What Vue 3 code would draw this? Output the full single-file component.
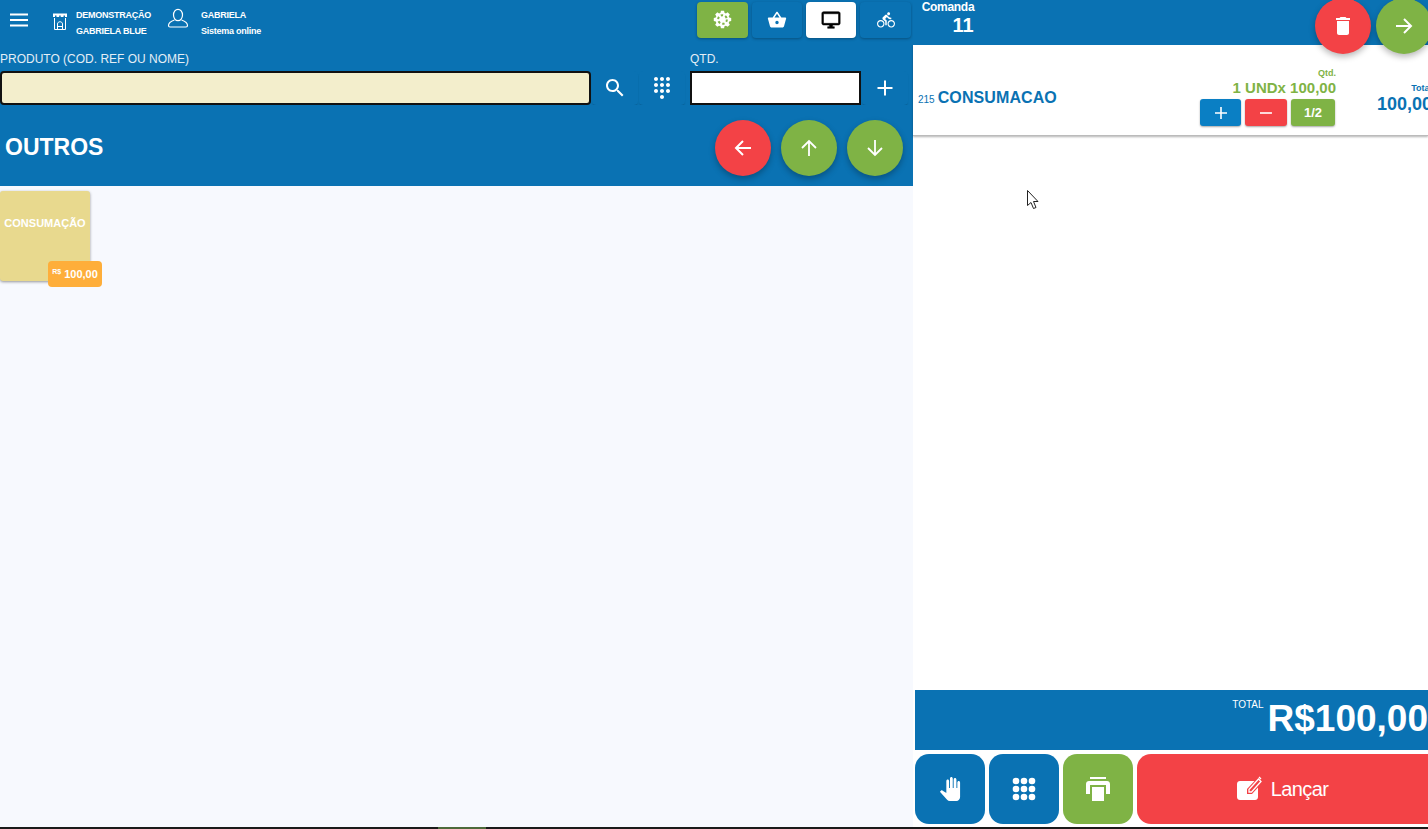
<template>
  <div class="app">
    <section class="left">
      <header class="topbar">
        <button class="menu" aria-label="menu">
          <svg width="20" height="14" viewBox="0 0 20 14"><path d="M1 1.500h18M1 7h18M1 12.500h18" stroke="#fff" stroke-width="2" /></svg>
        </button>
        <svg class="store" width="16" height="17" viewBox="0 0 16 17" fill="none" stroke="#fff">
          <path d="M2.500 5v11.500h11V5" />
          <path d="M5.500 16v-5c0-3 5-3 5 0v5M5.500 13.500h5" />
          <path d="M1 .5h14v3.500H1z" fill="#fff" stroke="none" />
          <path d="M3 2.500h1.500v2H3zM7.200 2.500h1.500v2H7.200zM11.500 2.500H13v2h-1.500z" fill="#0a72b3" stroke="none" />
        </svg>
        <div class="info">
          <span>DEMONSTRAÇÃO</span>
          <span>GABRIELA BLUE</span>
        </div>
        <svg class="person" width="22" height="22" viewBox="0 0 22 22" fill="none" stroke="#fff" stroke-width="1.200">
          <ellipse cx="11" cy="7" rx="4.500" ry="5.700" />
          <path d="M7.500 12c-3 1-6 2.500-6 5.500c0 1 .6 1.500 1.500 1.500h16c.9 0 1.500-.5 1.500-1.500c0-3-3-4.500-6-5.500" />
        </svg>
        <div class="info">
          <span>GABRIELA</span>
          <span>Sistema online</span>
        </div>
        <nav class="modes">
          <button class="mode green">
            <svg width="19" height="19" viewBox="0 0 24 24">
              <path fill="#fff" d="M10 1h4l.5 2.600 1.800.7 2.200-1.500 2.800 2.800-1.500 2.200.7 1.800 2.500.4v4l-2.500.5-.7 1.800 1.500 2.200-2.800 2.800-2.200-1.500-1.800.7L14 23h-4l-.5-2.500-1.800-.7-2.200 1.500-2.800-2.800 1.500-2.200-.7-1.800L1 14v-4l2.500-.4.700-1.800-1.500-2.200 2.800-2.800 2.200 1.500 1.800-.7z" />
              <circle cx="12" cy="12" r="5.500" fill="none" stroke="#7fb345" stroke-width="2.500" stroke-dasharray="3 2.760" />
            </svg>
          </button>
          <button class="mode">
            <svg width="20" height="20" viewBox="0 0 24 24"><path fill="#fff" d="M17.210 9l-4.380-6.560c-.19-.28-.51-.42-.83-.42-.32 0-.64.14-.83.43L6.790 9H2c-.55 0-1 .45-1 1 0 .09.01.18.04.27l2.540 9.270c.23.84 1 1.460 1.920 1.460h13c.92 0 1.690-.62 1.930-1.460l2.540-9.270L23 10c0-.55-.45-1-1-1h-4.790zM9 9l3-4.400L15 9H9zm3 8c-1.100 0-2-.9-2-2s.9-2 2-2 2 .9 2 2-.9 2-2 2z" /></svg>
          </button>
          <button class="mode white">
            <svg width="20" height="20" viewBox="0 0 24 24"><path fill="#000" stroke="#000" stroke-width=".6" d="M21 2H3c-1.100 0-2 .9-2 2v12c0 1.100.9 2 2 2h7v2H8v2h8v-2h-2v-2h7c1.100 0 2-.9 2-2V4c0-1.100-.9-2-2-2zm0 14H3V4.500h18V16z" /></svg>
          </button>
          <button class="mode">
            <svg width="18" height="18" viewBox="0 0 24 24"><path fill="#fff" d="M15.500 5.500c1.100 0 2-.9 2-2s-.9-2-2-2-2 .9-2 2 .9 2 2 2zM5 12c-2.800 0-5 2.200-5 5s2.200 5 5 5 5-2.200 5-5-2.200-5-5-5zm0 8.500c-1.900 0-3.500-1.600-3.500-3.500s1.600-3.500 3.500-3.500 3.500 1.600 3.500 3.500-1.600 3.500-3.500 3.500zm5.800-10l2.400-2.400.8.8c1.300 1.300 3 2.100 5.100 2.100V9c-1.500 0-2.700-.6-3.600-1.500l-1.900-1.900c-.5-.4-1-.6-1.600-.6s-1.100.2-1.400.6L7.800 8.400c-.4.4-.6.9-.6 1.400 0 .6.2 1.100.6 1.400L11 14v5h2v-6.200l-2.200-2.300zM19 12c-2.800 0-5 2.200-5 5s2.200 5 5 5 5-2.200 5-5-2.200-5-5-5zm0 8.500c-1.900 0-3.500-1.600-3.500-3.500s1.600-3.500 3.500-3.500 3.500 1.600 3.500 3.500-1.600 3.500-3.500 3.500z" /></svg>
          </button>
        </nav>
      </header>

      <div class="search">
        <div class="field grow">
          <label>PRODUTO (COD. REF OU NOME)</label>
          <div class="field-row">
            <input class="input cream" type="text" />
            <button class="tool">
              <svg width="24" height="24" viewBox="0 0 24 24"><path fill="#fff" d="M15.500 14h-.79l-.28-.27C15.410 12.590 16 11.110 16 9.500 16 5.910 13.090 3 9.500 3S3 5.910 3 9.500 5.910 16 9.500 16c1.610 0 3.090-.59 4.230-1.570l.27.28v.79l5 4.990L20.490 19l-4.990-5zm-6 0C7.010 14 5 11.990 5 9.500S7.010 5 9.500 5 14 7.010 14 9.500 11.990 14 9.500 14z" /></svg>
            </button>
            <button class="tool">
              <svg width="24" height="24" viewBox="0 0 24 24"><path fill="#fff" d="M12 19c-1.100 0-2 .9-2 2s.9 2 2 2 2-.9 2-2-.9-2-2-2zM6 1c-1.100 0-2 .9-2 2s.9 2 2 2 2-.9 2-2-.9-2-2-2zm0 6c-1.100 0-2 .9-2 2s.9 2 2 2 2-.9 2-2-.9-2-2-2zm0 6c-1.100 0-2 .9-2 2s.9 2 2 2 2-.9 2-2-.9-2-2-2zm12-8c1.100 0 2-.9 2-2s-.9-2-2-2-2 .9-2 2 .9 2 2 2zm-6 8c-1.100 0-2 .9-2 2s.9 2 2 2 2-.9 2-2-.9-2-2-2zm6 0c-1.100 0-2 .9-2 2s.9 2 2 2 2-.9 2-2-.9-2-2-2zm0-6c-1.100 0-2 .9-2 2s.9 2 2 2 2-.9 2-2-.9-2-2-2zm-6 0c-1.100 0-2 .9-2 2s.9 2 2 2 2-.9 2-2-.9-2-2-2zm0-6c-1.100 0-2 .9-2 2s.9 2 2 2 2-.9 2-2-.9-2-2-2z" /></svg>
            </button>
          </div>
        </div>
        <div class="field qtd">
          <label>QTD.</label>
          <div class="field-row">
            <input class="input white-input" type="text" />
            <button class="tool plus">
              <svg width="18" height="18" viewBox="0 0 18 18"><path d="M9 1.500v15M1.500 9h15" stroke="#fff" stroke-width="2" /></svg>
            </button>
          </div>
        </div>
      </div>

      <div class="category">
        <h1>OUTROS</h1>
        <div class="fabs">
          <button class="fab red">
            <svg width="20" height="20" viewBox="0 0 20 20" fill="none" stroke="#fff" stroke-width="2"><path d="M18 10H3M10 3l-7 7 7 7" /></svg>
          </button>
          <button class="fab green">
            <svg width="20" height="20" viewBox="0 0 20 20" fill="none" stroke="#fff" stroke-width="1.800"><path d="M10 18V3M3 10l7-7 7 7" /></svg>
          </button>
          <button class="fab green">
            <svg width="20" height="20" viewBox="0 0 20 20" fill="none" stroke="#fff" stroke-width="1.800"><path d="M10 2v15M3 10l7 7 7-7" /></svg>
          </button>
        </div>
      </div>

      <div class="products">
        <div v-for="p in products" :key="p.name" class="product">
          <span class="product-name">{{ p.name }}</span>
          <span class="price"><small>R$</small> {{ p.price }}</span>
        </div>
      </div>
    </section>

    <section class="right">
      <header class="order-head">
        <div class="comanda">
          <span>Comanda</span>
          <strong>11</strong>
        </div>
        <div class="order-fabs">
          <button class="fab red">
            <svg width="24" height="24" viewBox="0 0 24 24"><path fill="#fff" d="M6 19c0 1.100.9 2 2 2h8c1.100 0 2-.9 2-2V7H6v12zM19 4h-3.500l-1-1h-5l-1 1H5v2h14V4z" /></svg>
          </button>
          <button class="fab green">
            <svg width="20" height="20" viewBox="0 0 20 20" fill="none" stroke="#fff" stroke-width="2"><path d="M2 10h15M10 3l7 7-7 7" /></svg>
          </button>
        </div>
      </header>

      <div class="items">
        <article v-for="item in items" :key="item.code" class="item">
          <div class="item-name">
            <small>{{ item.code }}</small>
            <span>{{ item.name }}</span>
          </div>
          <div class="item-qty">
            <span class="qty-label">Qtd.</span>
            <span class="qty-value">{{ item.qty }}</span>
            <div class="qty-buttons">
              <button class="qty-btn blue">
                <svg width="14" height="14" viewBox="0 0 14 14"><path d="M7 1v12M1 7h12" stroke="#fff" stroke-width="1.600" /></svg>
              </button>
              <button class="qty-btn red">
                <svg width="14" height="14" viewBox="0 0 14 14"><path d="M1 7h12" stroke="#fff" stroke-width="1.600" /></svg>
              </button>
              <button class="qty-btn green half">1/2</button>
            </div>
          </div>
          <div class="item-total">
            <span class="total-label">Total</span>
            <span class="total-value">{{ item.total }}</span>
          </div>
        </article>
      </div>

      <div class="total-bar">
        <small>TOTAL</small>
        <strong>R$100,00</strong>
      </div>

      <footer class="actions">
        <button class="action blue">
          <svg width="22" height="24" viewBox="0 0 24 24" preserveAspectRatio="none"><path fill="#fff" d="M23 5.500V20c0 2.200-1.800 4-4 4h-7.300c-1.080 0-2.100-.43-2.850-1.190L1 14.830s1.260-1.230 1.300-1.250c.22-.19.49-.29.79-.29.22 0 .42.06.6.16.04.01 4.310 2.460 4.310 2.460V4c0-.83.67-1.500 1.500-1.500S11 3.170 11 4v7h1V1.500c0-.83.67-1.500 1.500-1.500S15 .67 15 1.500V11h1V2.500c0-.83.67-1.500 1.500-1.500s1.500.67 1.500 1.500V11h1V5.500c0-.83.67-1.500 1.500-1.500s1.500.67 1.500 1.500z" /></svg>
        </button>
        <button class="action blue">
          <svg width="24" height="24" viewBox="0 0 24 24" fill="#fff">
            <circle cx="4" cy="4" r="3.300" /><circle cx="12" cy="4" r="3.300" /><circle cx="20" cy="4" r="3.300" />
            <circle cx="4" cy="12" r="3.300" /><circle cx="12" cy="12" r="3.300" /><circle cx="20" cy="12" r="3.300" />
            <circle cx="4" cy="20" r="3.300" /><circle cx="12" cy="20" r="3.300" /><circle cx="20" cy="20" r="3.300" />
          </svg>
        </button>
        <button class="action green">
          <svg width="26" height="26" viewBox="0 0 26 26" fill="#fff">
            <path d="M5 1h16v2H5z" />
            <path d="M4 5h18c1.700 0 3 1.300 3 3v10h-4V9H5v9H1V8c0-1.700 1.300-3 3-3z" />
            <path d="M7 11h12v14H7z" />
          </svg>
        </button>
        <button class="action red launch">
          <svg width="26" height="26" viewBox="0 0 26 26">
            <path fill="#fff" d="M3 5h14.500L10 13v5h5l6-6.500V21c0 1.700-1.300 3-3 3H3c-1.700 0-3-1.300-3-3V8c0-1.700 1.300-3 3-3z" />
            <path fill="none" stroke="#fff" stroke-width="1.300" d="M12 13.500L21.500 3l2.500 2.500L14.500 16H12zM22 1l2 2" />
          </svg>
          <span>Lançar</span>
        </button>
      </footer>
    </section>

    <svg class="cursor" width="13" height="20" viewBox="0 0 13 20">
      <path d="M.5.500v15l3.500-3 2.500 6 2.500-1-2.500-6H11z" fill="#fff" stroke="#222" stroke-width="1" />
    </svg>
    <div class="taskbar"><span class="task-active"></span></div>
  </div>
</template>

<script setup>
const products = [
  { name: 'CONSUMAÇÃO', price: '100,00' }
]

const items = [
  { code: 215, name: 'CONSUMACAO', qty: '1 UNDx 100,00', total: '100,00' }
]
</script>

<style>
html, body {
  margin: 0;
  overflow: hidden;
}
</style>

<style scoped>
.app {
  position: relative;
  display: flex;
  width: 1428px;
  height: 829px;
  overflow: hidden;
  background: #fff;
  font-family: "Liberation Sans", Arial, sans-serif;
  color: #fff;
}

button {
  display: flex;
  align-items: center;
  justify-content: center;
  padding: 0;
  border: none;
  cursor: pointer;
  font-family: inherit;
}

.left {
  display: flex;
  flex-direction: column;
  width: 913px;
  flex-shrink: 0;
  background: #f7f9fe;
}

.topbar {
  display: flex;
  align-items: center;
  height: 45px;
  padding: 0 2px 6px 0;
  box-sizing: border-box;
  background: #0a72b3;
}
.menu {
  width: 38px;
  height: 38px;
  background: none;
}
.store {
  margin: 4px 8px 0 14px;
}
.person {
  margin: -1px 12px 0 16px;
}
.info {
  display: flex;
  flex-direction: column;
  gap: 5px;
  margin-top: 7px;
  font-size: 9px;
  line-height: 11px;
  font-weight: 700;
  letter-spacing: -.25px;
}
.modes {
  display: flex;
  gap: 4px;
  margin-left: auto;
}
.mode {
  width: 50px;
  height: 36px;
  border-radius: 4px;
  background: #0a72b3;
  box-shadow: 0 1px 3px rgba(0, 0, 0, .3);
}
.mode.green,
.mode:last-child { width: 51px; }
.mode.green { background: #7fb345; }
.mode.white { background: #fff; }

.search {
  display: flex;
  gap: 5px;
  height: 60px;
  padding-right: 5px;
  background: #0a72b3;
}
.field {
  display: flex;
  flex-direction: column;
}
.field.grow { flex: 1; }
.field.qtd { width: 218px; }
.field label {
  height: 26px;
  padding-top: 7px;
  box-sizing: border-box;
  font-size: 12px;
  line-height: 14px;
  color: #e4eef6;
}
.field-row {
  display: flex;
  gap: 1px;
  height: 34px;
}
.input {
  min-width: 0;
  flex: 1;
  height: 34px;
  padding: 0;
  box-sizing: border-box;
  border: 2px solid #111;
}
.cream {
  background: #f3eecc;
  border-radius: 4px;
}
.white-input {
  background: #fff;
}
.tool {
  width: 46px;
  height: 34px;
  border-radius: 4px;
  background: #0a72b3;
  box-shadow: 0 2px 2px -1px rgba(0, 0, 0, .3);
}

.category {
  display: flex;
  align-items: center;
  justify-content: space-between;
  height: 81px;
  padding: 0 10px 0 5px;
  background: #0a72b3;
}
.category h1 {
  margin: 3px 0 0;
  font-size: 23px;
  line-height: 28px;
  font-weight: 700;
}
.fabs {
  display: flex;
  gap: 10px;
  margin-top: 5px;
}
.fab {
  width: 56px;
  height: 56px;
  flex-shrink: 0;
  border-radius: 50%;
  box-shadow: 0 3px 6px rgba(0, 0, 0, .28);
}
.fab.red { background: #f34246; }
.fab.green { background: #7fb345; }

.products {
  flex: 1;
  padding: 5px 0;
}
.product {
  position: relative;
  width: 90px;
  height: 90px;
  border-radius: 3px;
  background: #e8d98e;
  box-shadow: 0 1px 3px rgba(0, 0, 0, .4);
  text-align: center;
}
.product-name {
  display: block;
  padding-top: 25px;
  font-size: 11px;
  line-height: 14px;
  font-weight: 700;
}
.price {
  position: absolute;
  left: 48px;
  top: 70px;
  display: flex;
  align-items: center;
  justify-content: center;
  gap: 3px;
  width: 54px;
  height: 26px;
  border-radius: 4px;
  background: #feae3a;
  font-size: 11px;
  font-weight: 700;
}
.price small {
  font-size: 7px;
  margin-top: -5px;
}

.right {
  display: flex;
  flex-direction: column;
  flex: 1;
  min-width: 0;
  background: #fff;
}
.order-head {
  position: relative;
  display: flex;
  justify-content: space-between;
  height: 45px;
  flex-shrink: 0;
  background: #0a72b3;
}
.comanda {
  display: flex;
  flex-direction: column;
  align-items: center;
  width: 70px;
}
.comanda span {
  font-size: 12px;
  line-height: 14px;
  font-weight: 700;
  letter-spacing: -.3px;
}
.comanda strong {
  margin-left: 30px;
  font-size: 20px;
  line-height: 22px;
}
.order-fabs {
  position: absolute;
  top: -2px;
  left: 402px;
  display: flex;
  gap: 5px;
}

.items {
  flex: 1;
  min-height: 0;
}
.item {
  display: flex;
  align-items: center;
  width: 100%;
  height: 91px;
  box-sizing: border-box;
  padding-left: 5px;
  border-bottom: 1px solid #bbb;
  box-shadow: 0 1px 2px rgba(0, 0, 0, .3);
  overflow: hidden;
}
.item-name {
  flex: 1;
  display: flex;
  align-items: baseline;
  gap: 3px;
  margin-top: 16px;
  color: #0a72b3;
  font-weight: 700;
  white-space: nowrap;
}
.item-name small {
  font-size: 10px;
  font-weight: 400;
}
.item-name span {
  font-size: 16px;
  letter-spacing: .1px;
}
.item-qty {
  display: flex;
  flex-direction: column;
  align-items: flex-end;
  padding-top: 14px;
  color: #7fb345;
  font-weight: 700;
}
.qty-label {
  font-size: 9px;
  line-height: 11px;
}
.qty-value {
  font-size: 15px;
  line-height: 17px;
  white-space: nowrap;
}
.qty-buttons {
  display: flex;
  gap: 4px;
  margin-top: 3px;
  margin-right: 1px;
}
.qty-btn {
  width: 41px;
  height: 27px;
  border-radius: 3px;
  box-shadow: 0 1px 2px rgba(0, 0, 0, .35);
  color: #fff;
}
.qty-btn.blue { background: #0a7fc4; }
.qty-btn.red { background: #f34246; width: 42px; }
.qty-btn.green { background: #7fb345; width: 44px; }
.half {
  font-size: 13px;
  font-weight: 700;
}
.item-total {
  display: flex;
  flex-direction: column;
  align-items: flex-end;
  width: 55px;
  margin: 16px -4px 0 41px;
  flex-shrink: 0;
  color: #0a72b3;
  font-weight: 700;
  white-space: nowrap;
}
.total-label {
  font-size: 9px;
  line-height: 11px;
}
.total-value {
  font-size: 18px;
  line-height: 20px;
}

.total-bar {
  display: flex;
  justify-content: flex-end;
  align-items: flex-start;
  gap: 4px;
  height: 60px;
  flex-shrink: 0;
  margin-left: 2px;
  background: #0a72b3;
  overflow: hidden;
}
.total-bar small {
  margin-top: 9px;
  font-size: 10px;
  line-height: 11px;
}
.total-bar strong {
  font-size: 37px;
  line-height: 58px;
  white-space: nowrap;
}

.actions {
  display: flex;
  gap: 4px;
  height: 70px;
  flex-shrink: 0;
  margin: 4px 0 5px 2px;
}
.action {
  width: 70px;
  height: 70px;
  flex-shrink: 0;
  border-radius: 14px;
  color: #fff;
}
.action.blue { background: #0a72b3; }
.action.green { background: #7fb345; }
.action.red { background: #f34246; }
.launch {
  flex: 1;
  gap: 8px;
  border-radius: 14px 0 0 14px;
  font-size: 20px;
  letter-spacing: -.6px;
}

.cursor {
  position: absolute;
  left: 1027px;
  top: 190px;
}
.taskbar {
  position: absolute;
  left: 0;
  right: 0;
  bottom: 0;
  height: 2px;
  background: #1a1a1a;
}
.task-active {
  position: absolute;
  left: 438px;
  width: 48px;
  height: 2px;
  background: #4d6a3b;
}
</style>
